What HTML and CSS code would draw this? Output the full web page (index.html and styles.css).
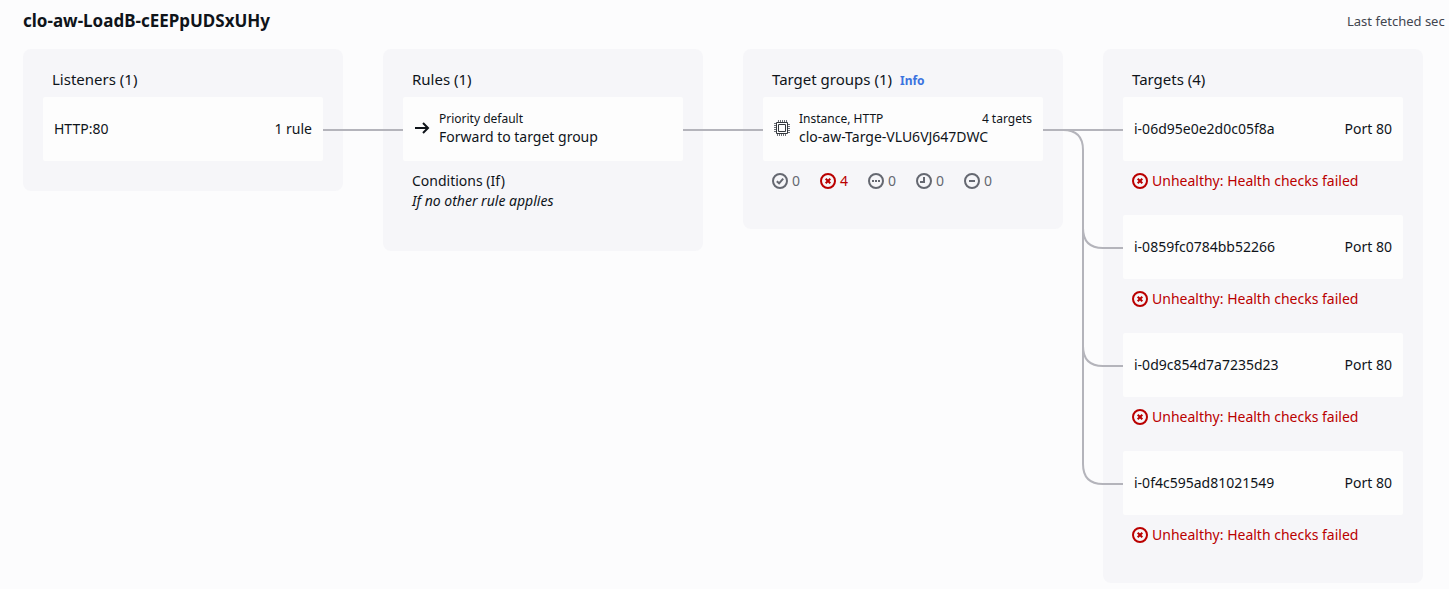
FILE: index.html
```html
<!DOCTYPE html>
<html lang="en">
<head>
<meta charset="utf-8">
<title>Resource map</title>
<link rel="stylesheet" href="styles.css">
</head>
<body>
<svg class="sprite" aria-hidden="true">
  <symbol id="ok" viewBox="0 0 16 16"><circle cx="8" cy="8" r="7"/><path d="M4.8 8.2 7.1 10.3 11.2 5.6"/></symbol>
  <symbol id="bad" viewBox="0 0 16 16"><circle cx="8" cy="8" r="7"/><path d="M5.7 5.7l4.6 4.6M10.3 5.7l-4.6 4.6"/></symbol>
  <symbol id="unused" viewBox="0 0 16 16"><circle cx="8" cy="8" r="7"/><path d="M4 8h2M7 8h2M10 8h2"/></symbol>
  <symbol id="initial" viewBox="0 0 16 16"><circle cx="8" cy="8" r="7"/><path d="M8 4v5H4"/></symbol>
  <symbol id="draining" viewBox="0 0 16 16"><circle cx="8" cy="8" r="7"/><path d="M5 8h6"/></symbol>
</svg>
<header class="header">
  <h1 class="name">clo-aw-LoadB-cEEPpUDSxUHy</h1>
  <span class="fetched">Last fetched sec</span>
</header>
<main class="map">
  <section class="panel">
    <h2 class="title">Listeners (1)</h2>
    <div class="item item-plain">
      <div class="card"><span>HTTP:80</span><span class="end">1 rule</span><i class="link-line"></i></div>
    </div>
  </section>

  <section class="panel">
    <h2 class="title">Rules (1)</h2>
    <div class="item item-rule">
      <div class="card card-icon">
        <svg class="icon arrow" viewBox="0 0 16 16" aria-hidden="true"><path d="M1 8h13M9 3l5 5-5 5"/></svg>
        <div class="body"><div class="small">Priority default</div><div>Forward to target group</div></div>
        <i class="link-line"></i>
      </div>
      <div class="detail">Conditions (If)<br><em>If no other rule applies</em></div>
    </div>
  </section>

  <section class="panel">
    <h2 class="title">Target groups (1) <a class="info" href="#info">Info</a></h2>
    <div class="item">
      <div class="card card-icon">
        <svg class="icon chip" viewBox="0 0 16 16" aria-hidden="true"><path d="M2.5 2.5h11v11h-11zM4.5 4.5h7v7h-7z"/><path class="pins" d="M4.5 0v2M6.5 0v2M8.5 0v2M10.5 0v2M12.5 0v2M3.5 14v2M5.5 14v2M7.5 14v2M9.5 14v2M11.5 14v2M0 3.5h2M0 5.5h2M0 7.5h2M0 9.5h2M0 11.5h2M14 4.5h2M14 6.5h2M14 8.5h2M14 10.5h2M14 12.5h2"/></svg>
        <div class="body">
          <div class="small split"><span>Instance, HTTP</span><span>4 targets</span></div>
          <div>clo-aw-Targe-VLU6VJ647DWC</div>
        </div>
        <svg class="tree" viewBox="0 0 80 390" aria-hidden="true"><path d="M0 33H80M20 33Q40 33 40 53V367Q40 387 60 387H80M40 131Q40 151 60 151H80M40 249Q40 269 60 269H80"/></svg>
      </div>
      <div class="detail counts">
        <span class="status"><svg class="icon"><use href="#ok"/></svg>0</span>
        <span class="status unhealthy"><svg class="icon"><use href="#bad"/></svg>4</span>
        <span class="status"><svg class="icon"><use href="#unused"/></svg>0</span>
        <span class="status"><svg class="icon"><use href="#initial"/></svg>0</span>
        <span class="status"><svg class="icon"><use href="#draining"/></svg>0</span>
      </div>
    </div>
  </section>

  <section class="panel">
    <h2 class="title">Targets (4)</h2>
    <div class="item">
      <div class="card"><span>i-06d95e0e2d0c05f8a</span><span class="end">Port 80</span></div>
      <div class="detail status unhealthy"><svg class="icon"><use href="#bad"/></svg>Unhealthy: Health checks failed</div>
    </div>
    <div class="item">
      <div class="card"><span>i-0859fc0784bb52266</span><span class="end">Port 80</span></div>
      <div class="detail status unhealthy"><svg class="icon"><use href="#bad"/></svg>Unhealthy: Health checks failed</div>
    </div>
    <div class="item">
      <div class="card"><span>i-0d9c854d7a7235d23</span><span class="end">Port 80</span></div>
      <div class="detail status unhealthy"><svg class="icon"><use href="#bad"/></svg>Unhealthy: Health checks failed</div>
    </div>
    <div class="item">
      <div class="card"><span>i-0f4c595ad81021549</span><span class="end">Port 80</span></div>
      <div class="detail status unhealthy"><svg class="icon"><use href="#bad"/></svg>Unhealthy: Health checks failed</div>
    </div>
  </section>
</main>
</body>
</html>
```
FILE: styles.css
```css
* { box-sizing: border-box; }
body {
  margin: 0;
  background: #fcfcfd;
  color: #0f141a;
  font: 14px/20px "Noto Sans", "Open Sans", sans-serif;
}
.sprite { position: absolute; width: 0; height: 0; }
.header {
  display: flex;
  justify-content: space-between;
  align-items: center;
  height: 49px;
  padding: 0 0 7px 23px;
}
.name { margin: 0; font-size: 17px; line-height: 24px; font-weight: 700; }
.fetched {
  width: 102px;
  overflow: hidden;
  white-space: nowrap;
  font-size: 13px;
  color: #424650;
}
.map {
  display: grid;
  grid-template-columns: repeat(4, minmax(0, 1fr));
  gap: 40px;
  align-items: start;
  padding: 0 26px 6px 23px;
}
.panel {
  padding: 20px 20px 14px;
  border-radius: 8px;
  background: #f6f6f9;
}
.title {
  display: flex;
  align-items: baseline;
  gap: 8px;
  margin: 0 0 8px;
  padding-left: 9px;
  font-size: 15px;
  line-height: 20px;
  font-weight: 400;
}
.info {
  color: #3b73e0;
  font-size: 12px;
  line-height: 16px;
  font-weight: 700;
  text-decoration: none;
}
.item { padding-bottom: 24px; }
.item-plain { padding-bottom: 16px; }
.item-rule { padding-bottom: 26px; }
.card {
  position: relative;
  display: flex;
  align-items: center;
  gap: 9px;
  height: 64px;
  padding: 0 11px;
  border-radius: 2px;
  background: #fdfdfd;
  white-space: nowrap;
}
.end { margin-left: auto; }
.card-icon { padding-bottom: 2px; }
.body { flex: 1; line-height: 18px; }
.small { font-size: 12px; }
.split { display: flex; justify-content: space-between; }
.detail { padding: 10px 9px 0; }
.status {
  display: flex;
  align-items: center;
  gap: 4px;
  color: #656871;
}
.counts { display: flex; gap: 20px; }
.unhealthy { color: #ba0000; }
.icon {
  flex: none;
  width: 16px;
  height: 16px;
  fill: none;
  stroke: currentColor;
  stroke-width: 2;
}
.chip { stroke: #33373d; stroke-width: 1; }
.pins { stroke: #6c6f76; }
.link-line {
  position: absolute;
  z-index: 1;
  left: 100%;
  top: 32px;
  width: 80px;
  height: 2px;
  background: #b4b4bb;
}
.tree {
  position: absolute;
  z-index: 1;
  left: 100%;
  top: 0;
  width: 80px;
  height: 390px;
  fill: none;
  stroke: #b4b4bb;
  stroke-width: 2;
}
```
